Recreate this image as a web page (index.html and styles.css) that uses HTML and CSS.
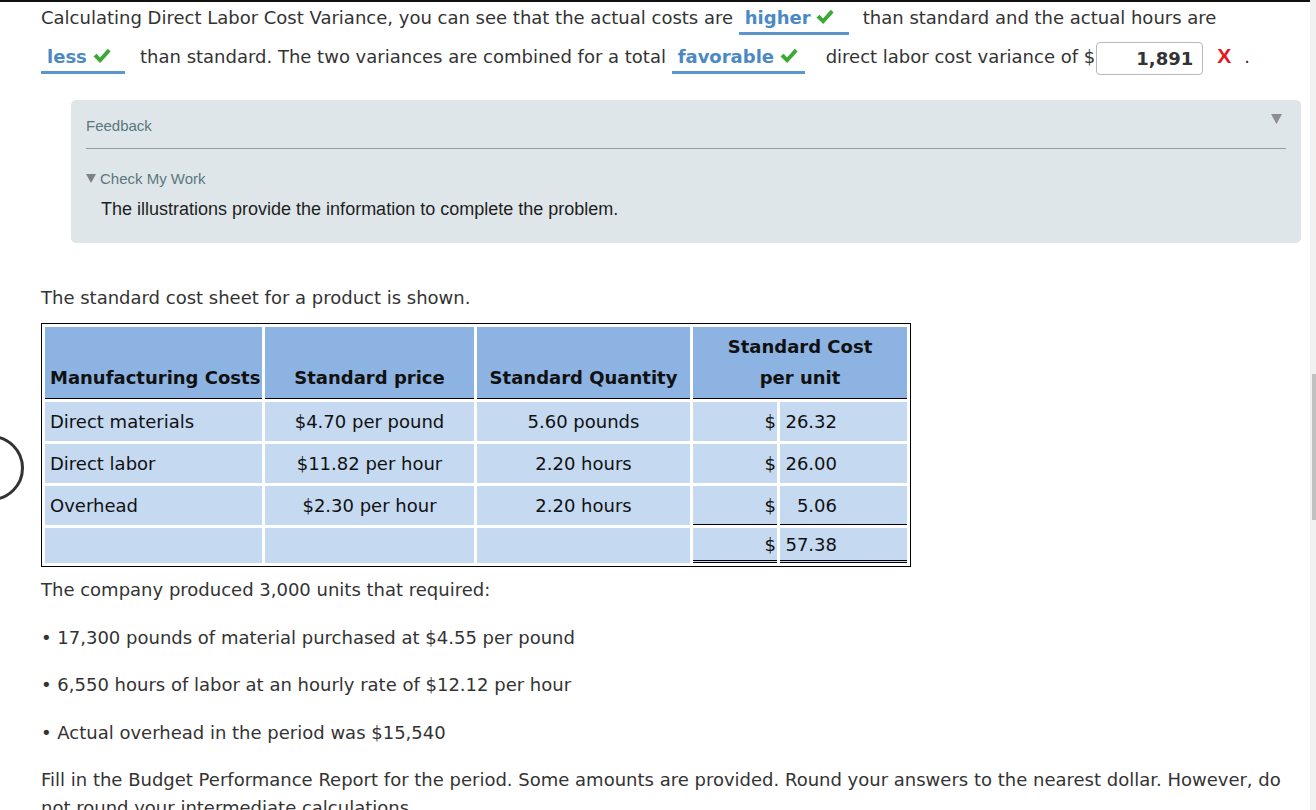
FILE: index.html
```html
<!DOCTYPE html>
<html lang="en">
<head>
<meta charset="utf-8">
<title>Direct Labor Cost Variance</title>
<link rel="stylesheet" href="styles.css">
</head>
<body>
<div class="page">
  <div class="content">
    <p class="intro">Calculating Direct Labor Cost Variance, you can see that the actual costs are <span class="ans w-higher"><b>higher</b> <svg class="check" viewBox="0 0 18 16" width="18" height="16"><path d="M0.5 8.6 L3.6 5.8 L7 9.4 L14.8 0.8 L17.6 3.4 L7.2 15 Z" fill="#3aa935"/></svg></span>than standard and the actual hours are<br><span class="ans w-less"><b>less</b> <svg class="check" viewBox="0 0 18 16" width="18" height="16"><path d="M0.5 8.6 L3.6 5.8 L7 9.4 L14.8 0.8 L17.6 3.4 L7.2 15 Z" fill="#3aa935"/></svg></span>than standard. The two variances are combined for a total <span class="ans w-fav"><b>favorable</b> <svg class="check" viewBox="0 0 18 16" width="18" height="16"><path d="M0.5 8.6 L3.6 5.8 L7 9.4 L14.8 0.8 L17.6 3.4 L7.2 15 Z" fill="#3aa935"/></svg></span>direct labor cost variance of $<span class="input">1,891</span><span class="wrong">X</span>.</p>

    <div class="feedback">
      <div class="fb-head">
        <span class="fb-title">Feedback</span>
        <svg class="fb-arrow" viewBox="0 0 11 10" width="11" height="10"><polygon points="0,0 11,0 5.5,10" fill="#8c8f91"/></svg>
      </div>
      <div class="fb-check"><svg class="fb-tri" viewBox="0 0 10 9" width="10" height="9"><polygon points="0,0 10,0 5,9" fill="#7d8185"/></svg>Check My Work</div>
      <div class="fb-text">The illustrations provide the information to complete the problem.</div>
    </div>

    <p class="lead">The standard cost sheet for a product is shown.</p>

    <table class="cost">
      <colgroup>
        <col class="c1"><col class="c2"><col class="c3"><col class="c4"><col class="c5">
      </colgroup>
      <thead>
        <tr class="hrow">
          <th class="left">Manufacturing Costs</th>
          <th>Standard price</th>
          <th>Standard Quantity</th>
          <th colspan="2">Standard Cost<br>per unit</th>
        </tr>
      </thead>
      <tbody>
        <tr class="row">
          <td class="name">Direct materials</td>
          <td class="mid">$4.70 per pound</td>
          <td class="mid">5.60 pounds</td>
          <td class="cur">$</td>
          <td class="amt"><span class="num">26.32</span></td>
        </tr>
        <tr class="row">
          <td class="name">Direct labor</td>
          <td class="mid">$11.82 per hour</td>
          <td class="mid">2.20 hours</td>
          <td class="cur">$</td>
          <td class="amt"><span class="num">26.00</span></td>
        </tr>
        <tr class="row sub">
          <td class="name">Overhead</td>
          <td class="mid">$2.30 per hour</td>
          <td class="mid">2.20 hours</td>
          <td class="cur">$</td>
          <td class="amt"><span class="num">5.06</span></td>
        </tr>
        <tr class="row total">
          <td></td>
          <td></td>
          <td></td>
          <td class="cur">$</td>
          <td class="amt"><span class="num">57.38</span></td>
        </tr>
      </tbody>
    </table>

    <p class="after">The company produced 3,000 units that required:</p>
    <p class="para">• 17,300 pounds of material purchased at $4.55 per pound</p>
    <p class="para">• 6,550 hours of labor at an hourly rate of $12.12 per hour</p>
    <p class="para">• Actual overhead in the period was $15,540</p>
    <p class="para">Fill in the Budget Performance Report for the period. Some amounts are provided. Round your answers to the nearest dollar. However, do not round your intermediate calculations.</p>
  </div>
  <div class="circle"></div>
</div>
<div class="scrollbar"><div class="thumb"></div></div>
</body>
</html>
```

FILE: styles.css
```css
html, body {
  margin: 0;
  padding: 0;
  height: 100%;
  overflow: hidden;
  background: #fff;
}

body {
  display: flex;
  font-family: "DejaVu Sans", Verdana, sans-serif;
  font-size: 18px;
  color: #333;
}

.page {
  position: relative;
  flex: 1;
  border-top: 2px solid #111;
  overflow: hidden;
}

.content {
  width: 1260px;
  padding-left: 41px;
}

.intro {
  margin: -3px 0 0 0;
  line-height: 38px;
}

.ans {
  display: inline-block;
  box-sizing: border-box;
  line-height: 28px;
  padding-left: 6px;
  border-bottom: 3px solid #5a95cc;
  white-space: nowrap;
}

.ans b {
  color: #4a89c5;
  font-weight: bold;
}

.check {
  vertical-align: -1px;
}

.w-higher { width: 110px; margin-right: 14px; }
.w-less { width: 84px; margin-right: 15px; }
.w-fav { width: 133px; margin-right: 21px; }

.input {
  display: inline-block;
  box-sizing: border-box;
  width: 107px;
  height: 33px;
  line-height: 31px;
  border: 1px solid #b8b8b8;
  border-radius: 4px;
  text-align: right;
  padding-right: 9px;
  font-weight: bold;
  color: #333;
  vertical-align: middle;
  margin-left: 1px;
}

.wrong {
  display: inline-block;
  font-family: "Liberation Sans", Arial, sans-serif;
  font-weight: bold;
  font-size: 21px;
  color: #e8161b;
  margin: 0 13px 0 14px;
}

.feedback {
  box-sizing: border-box;
  width: 1230px;
  height: 143px;
  margin: 24px 0 0 30px;
  padding: 0 15px;
  background: #dfe6e9;
  border-radius: 5px;
  font-family: "Liberation Sans", Arial, sans-serif;
}

.fb-head {
  display: flex;
  justify-content: space-between;
  align-items: flex-start;
  padding: 17px 0 13px;
  line-height: 18px;
  border-bottom: 1px solid #979c9f;
}

.fb-title {
  font-size: 15px;
  color: #5a787d;
}

.fb-arrow {
  margin: -3px 4px 0 0;
}

.fb-check {
  margin-top: 21px;
  font-size: 15px;
  line-height: 18px;
  color: #5a787d;
}

.fb-tri {
  margin-right: 4px;
  vertical-align: 1px;
}

.fb-text {
  margin-top: 10px;
  padding-left: 15px;
  font-size: 18px;
  line-height: 22px;
  color: #1e1e1e;
}

.lead {
  margin: 41px 0 0 0;
  line-height: 28px;
}

.cost {
  margin-top: 11px;
  border: 1px solid #000;
  border-collapse: separate;
  border-spacing: 3px;
  table-layout: fixed;
  width: 870px;
  color: #111;
}

.c1 { width: 217px; }
.c2 { width: 209px; }
.c3 { width: 213px; }
.c4 { width: 84px; }
.c5 { width: 127px; }

.cost th {
  background: #8db3e2;
  font-weight: bold;
  line-height: 31px;
  vertical-align: bottom;
  padding: 0 0 5px 0;
  border-bottom: 1px solid #000;
  text-align: center;
  white-space: nowrap;
}

.cost th.left {
  text-align: left;
  padding-left: 5px;
}

.hrow { height: 72px; }

.cost td {
  background: #c5d9f1;
  padding: 0;
  vertical-align: middle;
  white-space: nowrap;
}

.row { height: 39px; }
.row.total { height: 35px; }

.name { padding-left: 5px !important; }
.mid { text-align: center; }
.cur { text-align: right; padding-right: 1px !important; }
.amt { padding-left: 5px !important; }

.num {
  display: inline-block;
  width: 52px;
  text-align: right;
}

.sub .cur, .sub .amt {
  border-bottom: 1px solid #000;
}

.total .cur, .total .amt {
  border-bottom: 3px double #000;
}

.after {
  margin: 9px 0 0 0;
  line-height: 28px;
}

.para {
  margin: 19.5px 0 0 0;
  line-height: 28px;
}

.circle {
  position: absolute;
  left: -42px;
  top: 433px;
  width: 60px;
  height: 60px;
  border: 3px solid #333;
  border-radius: 50%;
}

.scrollbar {
  width: 6px;
  background: #f1f1f1;
  flex: none;
}

.thumb {
  margin: 374px 0 0 2px;
  width: 4px;
  height: 146px;
  background: #c1c1c1;
}
```
